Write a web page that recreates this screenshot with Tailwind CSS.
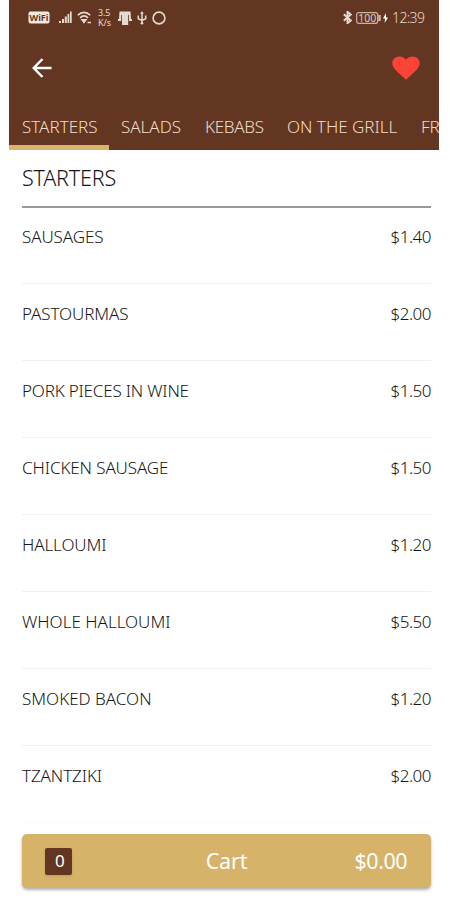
<!DOCTYPE html>
<html lang="en">

<head>
    <meta charset="UTF-8">
    <meta name="viewport" content="width=device-width, initial-scale=1.0">
    <title>Menu</title>
    <script src="https://cdn.jsdelivr.net/npm/@tailwindcss/browser@4"></script>
</head>

<body class="bg-white font-['Noto_Sans','Open_Sans',sans-serif] font-light text-[#151515]">
    <div class="flex flex-col ml-[9px] w-[430px] h-[900px] overflow-hidden">
        <header class="flex flex-col bg-[#633621] h-[150px] shrink-0 overflow-hidden">
            <!-- status bar -->
            <div class="flex justify-between items-center h-[35px] pl-[19px] pr-[14px] text-[#e6d9d2]">
                <div class="flex items-center">
                    <svg class="w-[22px] h-[13px]" viewBox="0 0 22 13">
                        <rect x="0.5" y="0.5" width="21" height="12" rx="2" fill="#f2e9e4" />
                        <text x="11" y="9.500" text-anchor="middle" textLength="19" lengthAdjust="spacingAndGlyphs" font-size="8" font-weight="700" fill="#633621">WiFi</text>
                    </svg>
                    <svg class="w-[13px] h-[13px] ml-[9px]" viewBox="0 0 13 13" fill="currentColor">
                        <path d="M0 10h2v2H0zM3 8h2v4H3zM5.800 5.500h2V12h-2zM8.500 3h1.800v9H8.500zM11 0.500h1.700V12H11z" />
                    </svg>
                    <svg class="w-[15px] h-[13px] ml-[5px]" viewBox="0 0 15 13" fill="none" stroke="currentColor" stroke-width="1.600">
                        <path d="M0.800 4.200C4.500 0.400 9.500 0.400 13.200 4.200M3 6.800c2.500-2.400 5.500-2.400 8 0" />
                        <path d="M5 8.800h4L7 11.500zM10.500 11.500h3.500" fill="currentColor" stroke-width="1.500" />
                    </svg>
                    <div class="flex flex-col w-[14px] ml-[6px] text-[9px] leading-[9px] font-normal tracking-[-0.1px]">
                        <span class="h-[10px]">3.5</span>
                        <span class="h-[9px]">K/s</span>
                    </div>
                    <svg class="w-[14px] h-[14px] ml-[6px]" viewBox="0 0 14 14" fill="currentColor">
                        <path d="M1.500 0.500h11l.5 7.500h1v2h-3V4h-.8v10H4V4h-.8v6H0V8h1z" />
                    </svg>
                    <svg class="w-[10px] h-[14px] ml-[5px]" viewBox="0 0 10 14" fill="none" stroke="currentColor" stroke-width="1.500">
                        <path d="M5 2v10M1.300 4.500v3.200L5 9.500l3.700-1.800V4.500" />
                        <path d="M5 0l1.800 2.800H3.200z" fill="currentColor" stroke="none" />
                        <circle cx="5" cy="12.300" r="1.300" fill="currentColor" stroke="none" />
                    </svg>
                    <svg class="w-[14px] h-[14px] ml-[5px]" viewBox="0 0 14 14" fill="none" stroke="currentColor" stroke-width="1.600">
                        <circle cx="7" cy="7" r="5.900" />
                    </svg>
                </div>
                <div class="flex items-center">
                    <svg class="w-[9px] h-[13px]" viewBox="0 0 9 13" fill="none" stroke="currentColor" stroke-width="1.900">
                        <path d="M0.800 3.300l7 6.200-3.300 2.700V0.800l3.300 2.700-7 6.200" />
                    </svg>
                    <svg class="w-[25px] h-[12px] ml-[4px]" viewBox="0 0 25 12" fill="none" stroke="#cbb3a6">
                        <rect x="0.700" y="0.700" width="21" height="10.600" rx="2" stroke-width="1.200" />
                        <path d="M23.500 3v6" stroke-width="2.500" />
                        <text x="11.200" y="9.700" text-anchor="middle" textLength="18" lengthAdjust="spacingAndGlyphs" font-size="10.500" font-weight="400" fill="#dccbc1" stroke="none">100</text>
                    </svg>
                    <svg class="w-[5px] h-[10px] ml-[2px]" viewBox="0 0 5 10" fill="#fff">
                        <path d="M3 0L0 5.500h2L1.700 10 5 4.500H3z" />
                    </svg>
                    <span class="ml-[4px] w-[33px] text-[14px] font-light tracking-[-0.6px] whitespace-nowrap">12:39</span>
                </div>
            </div>
            <!-- toolbar -->
            <div class="flex justify-between items-center h-[66px] pl-[23px] pr-[19px]">
                <svg class="w-[20px] h-[20px]" viewBox="0 0 20 20" fill="none" stroke="#fff" stroke-width="2.400">
                    <path d="M19.500 10H2M10.500 1L1.700 10l8.800 9" />
                </svg>
                <svg class="w-[28px] h-[24px]" viewBox="0 0 28 24" fill="#fb4437">
                    <path d="M14 23.800L11.500 21.500C4 14.800 0.300 11.500 0.300 7.300 0.300 3.500 3.200 0.500 7.300 0.500c2.500 0 5 1.200 6.700 3.200 1.700-2 4.200-3.200 6.700-3.200 4.100 0 7 3 7 6.800 0 4.200-3.700 7.500-11.200 14.200z" />
                </svg>
            </div>
            <!-- category tabs -->
            <nav class="flex h-[49px] text-[17px] leading-[51px] text-[#f0dccb] whitespace-nowrap">
                <div class="w-[100px] shrink-0 pl-[13px] border-b-5 border-[#d9b56c]">STARTERS</div>
                <div class="w-[84px] shrink-0 pl-[12px]">SALADS</div>
                <div class="w-[82px] shrink-0 pl-[12px] tracking-[-0.3px]">KEBABS</div>
                <div class="w-[134px] shrink-0 pl-[12px]">ON THE GRILL</div>
                <div class="shrink-0 pl-[12px]">FROM</div>
            </nav>
        </header>

        <main class="flex flex-col pl-[13px] pr-[8px] h-[684px] shrink-0 overflow-hidden">
            <h1 class="h-[58px] shrink-0 border-b-2 border-[#999] text-[21.500px] leading-[56px] tracking-[-0.2px]">STARTERS</h1>
            <ul class="text-[17px] leading-[22px] tracking-[-0.1px]">
                <li class="flex justify-between h-[76px] pt-[18px] border-b border-[#f0f0f0]"><span>SAUSAGES</span><span class="tracking-[-0.5px]">$1.40</span></li>
                <li class="flex justify-between h-[77px] pt-[19px] border-b border-[#f0f0f0]"><span>PASTOURMAS</span><span class="tracking-[-0.5px]">$2.00</span></li>
                <li class="flex justify-between h-[77px] pt-[19px] border-b border-[#f0f0f0]"><span class="tracking-[-0.2px]">PORK PIECES IN WINE</span><span class="tracking-[-0.5px]">$1.50</span></li>
                <li class="flex justify-between h-[77px] pt-[19px] border-b border-[#f0f0f0]"><span>CHICKEN SAUSAGE</span><span class="tracking-[-0.5px]">$1.50</span></li>
                <li class="flex justify-between h-[77px] pt-[19px] border-b border-[#f0f0f0]"><span>HALLOUMI</span><span class="tracking-[-0.5px]">$1.20</span></li>
                <li class="flex justify-between h-[77px] pt-[19px] border-b border-[#f0f0f0]"><span class="tracking-normal">WHOLE HALLOUMI</span><span class="tracking-[-0.5px]">$5.50</span></li>
                <li class="flex justify-between h-[77px] pt-[19px] border-b border-[#f0f0f0]"><span class="tracking-normal">SMOKED BACON</span><span class="tracking-[-0.5px]">$1.20</span></li>
                <li class="flex justify-between h-[77px] pt-[19px] border-b border-[#fafafa]"><span>TZANTZIKI</span><span class="tracking-[-0.5px]">$2.00</span></li>
            </ul>
        </main>

        <!-- cart button -->
        <button class="grid grid-cols-3 items-center ml-[13px] w-[409px] h-[54px] shrink-0 px-[24px] rounded-[5px] bg-[#d7b36a] shadow-[0_2px_3px_rgba(0,0,0,0.3)] text-white text-[21.500px] font-normal tracking-[-0.5px]">
            <span class="flex justify-center items-center w-[27px] h-[27px] ml-[-1px] pl-[2px] rounded-[2px] bg-[#633621] shadow-sm text-[17px]">0</span>
            <span class="text-center tracking-[-0.2px]">Cart</span>
            <span class="text-right">$0.00</span>
        </button>
    </div>
</body>

</html>
